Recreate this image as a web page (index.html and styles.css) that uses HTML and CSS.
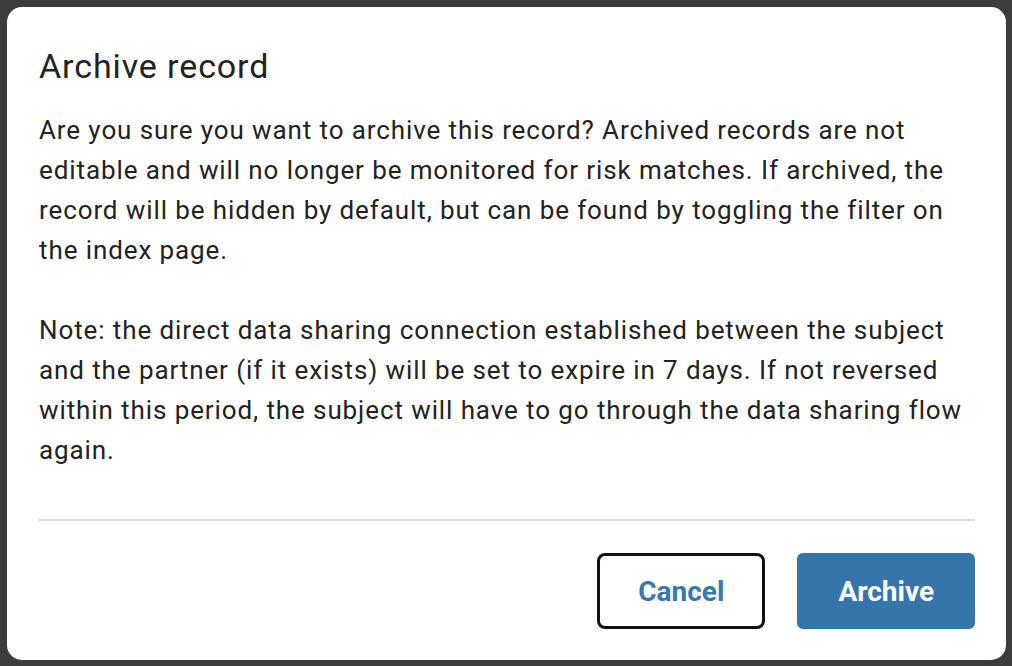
FILE: index.html
```html
<!DOCTYPE html>
<html lang="en">

<head>
    <meta charset="UTF-8">
    <meta name="viewport" content="width=device-width, initial-scale=1.0">
    <title>Archive record</title>
    <link rel="stylesheet" href="styles.css">
</head>

<body>
    <div class="backdrop">
        <div class="modal">
            <h1 class="modal-title">Archive record</h1>
            <div class="modal-body">
                <p>Are you sure you want to archive this record? Archived records are not editable and will no longer be monitored for risk matches. If archived, the record will be hidden by default, but can be found by toggling the filter on the index page.</p>
                <p>Note: the direct data sharing connection established between the subject and the partner (if it exists) will be set to expire in 7 days. If not reversed within this period, the subject will have to go through the data sharing flow again.</p>
            </div>
            <div class="modal-footer">
                <button class="btn btn-outline">Cancel</button>
                <button class="btn btn-primary">Archive</button>
            </div>
        </div>
    </div>
</body>

</html>
```

FILE: styles.css
```css
html,
body {
    margin: 0;
    padding: 0;
    height: 100%;
}

body {
    font-family: Roboto, "Liberation Sans", Arial, sans-serif;
    background-color: #3c3c3c;
    color: #222222;
}

.backdrop {
    padding: 7px 6px 6px 7px;
}

.modal {
    background-color: #ffffff;
    border-radius: 15px;
    height: 653px;
    box-sizing: border-box;
    padding: 40px 31px 31px 32px;
    display: flex;
    flex-direction: column;
}

.modal-title {
    font-size: 34px;
    font-weight: 400;
    letter-spacing: 0.9px;
    line-height: 38px;
    margin: 0 0 25px;
}

.modal-body {
    flex: 1;
}

.modal-body p {
    font-size: 26px;
    letter-spacing: 0.9px;
    line-height: 40px;
    margin: 0 0 40px;
}

.modal-body p:last-child {
    margin-bottom: 0;
}

.modal-footer {
    border-top: 2px solid #d8d8d8;
    padding-top: 32px;
    display: flex;
    justify-content: flex-end;
    gap: 32px;
}

.btn {
    font-family: Roboto, "Liberation Sans", Arial, sans-serif;
    font-size: 28px;
    font-weight: 700;
    height: 76px;
    padding: 0 38px;
    border: 3px solid transparent;
    border-radius: 8px;
    cursor: pointer;
}

.btn-outline {
    background-color: #ffffff;
    border-color: #111111;
    color: #3a78ac;
}

.btn-primary {
    background-color: #3675a9;
    border-color: #3675a9;
    border-radius: 6px;
    color: #ffffff;
}
```
